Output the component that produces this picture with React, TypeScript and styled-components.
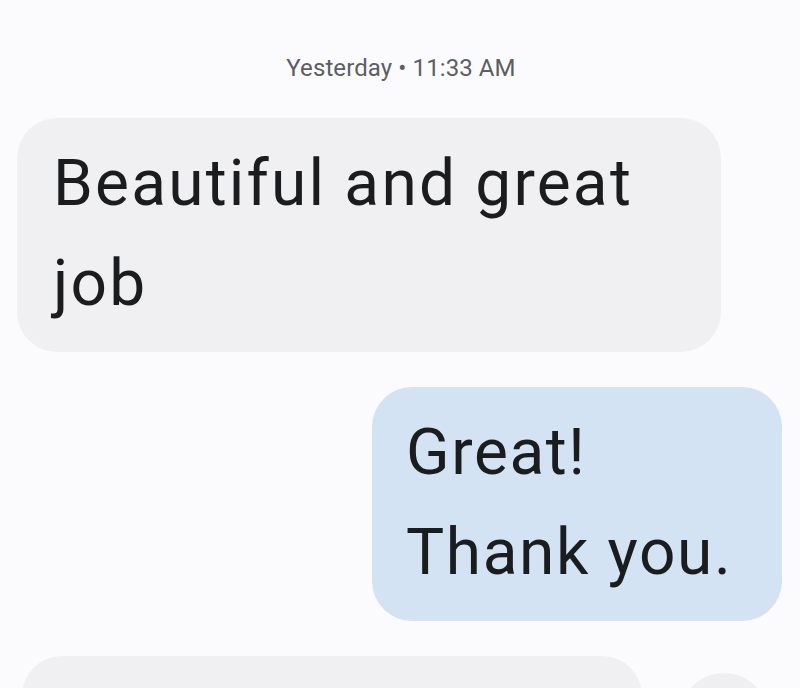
import React from "react";
import styled, { createGlobalStyle } from "styled-components";

const Global = createGlobalStyle`
  html, body { margin: 0; padding: 0; background: #fbfbfd; }
  body { font-family: Roboto, "Noto Sans", sans-serif; overflow: hidden; }
`;

const Screen = styled.div`
  width: 800px;
  height: 688px;
  overflow: hidden;
  background: #fbfbfd;
  display: flex;
  flex-direction: column;
  padding-top: 52px;
  box-sizing: border-box;
`;

const Stamp = styled.div`
  text-align: center;
  font-size: 24px;
  line-height: 32px;
  color: #5b5e63;
  margin-bottom: 34px;
  letter-spacing: 0.1px;
  padding-left: 2px;
`;

const Bubble = styled.div<{ $out?: boolean; $width: number }>`
  box-sizing: border-box;
  width: ${(p) => p.$width}px;
  align-self: ${(p) => (p.$out ? "flex-end" : "flex-start")};
  margin: ${(p) => (p.$out ? "0 18px 35px 0" : "0 0 35px 17px")};
  padding: 16px 20px 18px ${(p) => (p.$out ? 34 : 36)}px;
  border-radius: 40px;
  background: ${(p) => (p.$out ? "#d3e3f3" : "#f0f0f3")};
  color: #1b1c1e;
  font-size: 64px;
  line-height: 100px;
  letter-spacing: ${(p) => (p.$out ? 1.6 : 2.2)}px;
  white-space: pre-wrap;
`;

const BottomRow = styled.div`
  display: flex;
  align-items: flex-start;
  padding-left: 22px;
  gap: 38px;
`;

const Partial = styled.div`
  width: 620px;
  height: 200px;
  border-radius: 40px;
  background: #f0f0f3;
  flex-shrink: 0;
`;

const Circle = styled.div`
  width: 88px;
  height: 88px;
  margin-top: 17px;
  border-radius: 50%;
  background: #efeff2;
  flex-shrink: 0;
`;

export default function App() {
  return (
    <>
      <Global />
      <Screen>
        <Stamp>Yesterday • 11:33 AM</Stamp>
        <Bubble $width={704}>Beautiful and great job</Bubble>
        <Bubble $out $width={410}>{"Great!\nThank you."}</Bubble>
        <BottomRow>
          <Partial />
          <Circle />
        </BottomRow>
      </Screen>
    </>
  );
}
